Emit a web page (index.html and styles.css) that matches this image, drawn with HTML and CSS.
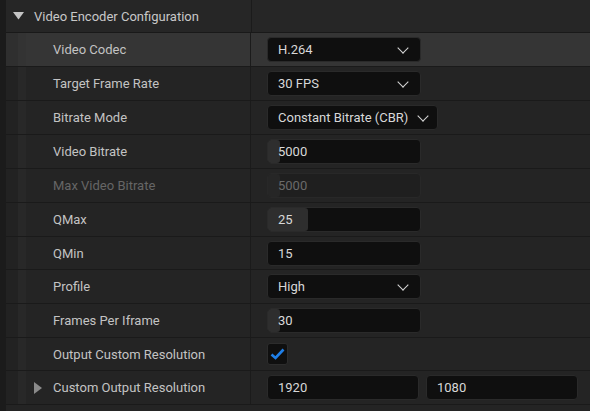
FILE: index.html
```html
<!DOCTYPE html>
<html>
<head>
<meta charset="utf-8">
<title>Details - Video Encoder</title>
<link rel="stylesheet" href="styles.css">
</head>
<body>
<div class="panel">
  <div class="cat">
    <div class="cat-name">
      <svg class="tri" width="11" height="8" viewBox="0 0 11 8"><path d="M0 0H11L5.5 7.5Z" fill="#c4c4c4"/></svg>
      <span>Video Encoder Configuration</span>
    </div>
    <div class="cat-val"></div>
  </div>

  <div class="row hover">
    <div class="gut"></div>
    <div class="name">Video Codec</div>
    <div class="val"><div class="combo">H.264<i class="chev"></i></div></div>
  </div>
  <div class="row">
    <div class="gut"></div>
    <div class="name">Target Frame Rate</div>
    <div class="val"><div class="combo">30 FPS<i class="chev"></i></div></div>
  </div>
  <div class="row">
    <div class="gut"></div>
    <div class="name">Bitrate Mode</div>
    <div class="val"><div class="combo wide">Constant Bitrate (CBR)<i class="chev"></i></div></div>
  </div>
  <div class="row">
    <div class="gut"></div>
    <div class="name">Video Bitrate</div>
    <div class="val"><div class="num"><b class="fill" style="width:12px"></b><span>5000</span></div></div>
  </div>
  <div class="row off">
    <div class="gut"></div>
    <div class="name">Max Video Bitrate</div>
    <div class="val"><div class="num"><b class="fill" style="width:12px"></b><span>5000</span></div></div>
  </div>
  <div class="row">
    <div class="gut"></div>
    <div class="name">QMax</div>
    <div class="val"><div class="num"><b class="fill" style="width:40px"></b><span>25</span></div></div>
  </div>
  <div class="row short">
    <div class="gut"></div>
    <div class="name">QMin</div>
    <div class="val"><div class="num"><span>15</span></div></div>
  </div>
  <div class="row">
    <div class="gut"></div>
    <div class="name">Profile</div>
    <div class="val"><div class="combo">High<i class="chev"></i></div></div>
  </div>
  <div class="row">
    <div class="gut"></div>
    <div class="name">Frames Per Iframe</div>
    <div class="val"><div class="num"><b class="fill" style="width:12px"></b><span>30</span></div></div>
  </div>
  <div class="row short">
    <div class="gut"></div>
    <div class="name">Output Custom Resolution</div>
    <div class="val">
      <div class="check">
        <svg width="15" height="12" viewBox="0 0 15 12"><path d="M1.5 6.5L5.5 10L13.5 1.5" fill="none" stroke="#1f7fe8" stroke-width="2.6"/></svg>
      </div>
    </div>
  </div>
  <div class="row">
    <div class="gut"></div>
    <div class="name">
      <svg class="tri-r" width="8" height="12" viewBox="0 0 8 12"><path d="M0 0V12L8 6Z" fill="#8a8a8a"/></svg>
      Custom Output Resolution
    </div>
    <div class="val pair">
      <div class="num"><span>1920</span></div>
      <div class="num"><span>1080</span></div>
    </div>
  </div>
  <div class="tail"></div>
</div>
</body>
</html>
```

FILE: styles.css
```css
html,body{margin:0;padding:0;}
body{background:#1b1b1b;font:13px/1 Roboto,"Liberation Sans",sans-serif;color:#c3c3c3;width:590px;height:411px;overflow:hidden;}
.panel{margin-left:6px;background:#242424;}

/* category header */
.cat{display:flex;height:32px;background:#262626;border-bottom:1px solid #191919;}
.cat-name{width:245px;display:flex;align-items:center;border-right:1px solid #1b1b1b;color:#c8c8c8;}
.cat-name .tri{margin:0 10px 0 7px;}
.cat-val{flex:1;}

/* property rows */
.row{display:flex;height:33px;border-bottom:1px solid #1a1a1a;background:#242424;}
.row.short{height:32px;}
.row.hover{background:#353535;}
.gut{width:12px;background:#222;border-right:8px solid #282828;}
.row.hover .gut{background:#2f2f2f;border-right-color:#333;}
.name{width:225px;padding-left:27px;box-sizing:border-box;display:flex;align-items:center;border-right:1px solid #1b1b1b;white-space:nowrap;}
.name .tri-r{margin-left:-19px;margin-right:11px;}
.row.off .name{color:#666;}
.val{flex:1;display:flex;align-items:center;padding-left:16px;gap:7px;}

/* widgets */
.combo,.num{position:relative;box-sizing:border-box;width:154px;height:25px;background:#0f0f0f;border:1px solid #2a2a2a;border-radius:4px;display:flex;align-items:center;padding-left:10px;color:#d8d8d8;}
.combo.wide{width:171px;}
.chev{position:absolute;right:13px;top:6px;width:7px;height:7px;border-right:1.6px solid #d6d6d6;border-bottom:1.6px solid #d6d6d6;transform:rotate(45deg);}
.combo.wide .chev{right:10px;}
.num .fill{position:absolute;left:0;top:0;bottom:0;background:#2e2e2e;border-radius:3px;}
.num span{position:relative;}
.row.off .num{background:#1f1f1f;border-color:#282828;color:#6a6a6a;}
.row.off .num .fill{background:#262626;}
.pair .num{width:152px;}
.check{box-sizing:border-box;width:21px;height:22px;background:#0f0f0f;border:1px solid #2c2c2c;border-radius:3px;display:flex;align-items:center;justify-content:center;}
.tail{height:6px;background:#242424;}
```
